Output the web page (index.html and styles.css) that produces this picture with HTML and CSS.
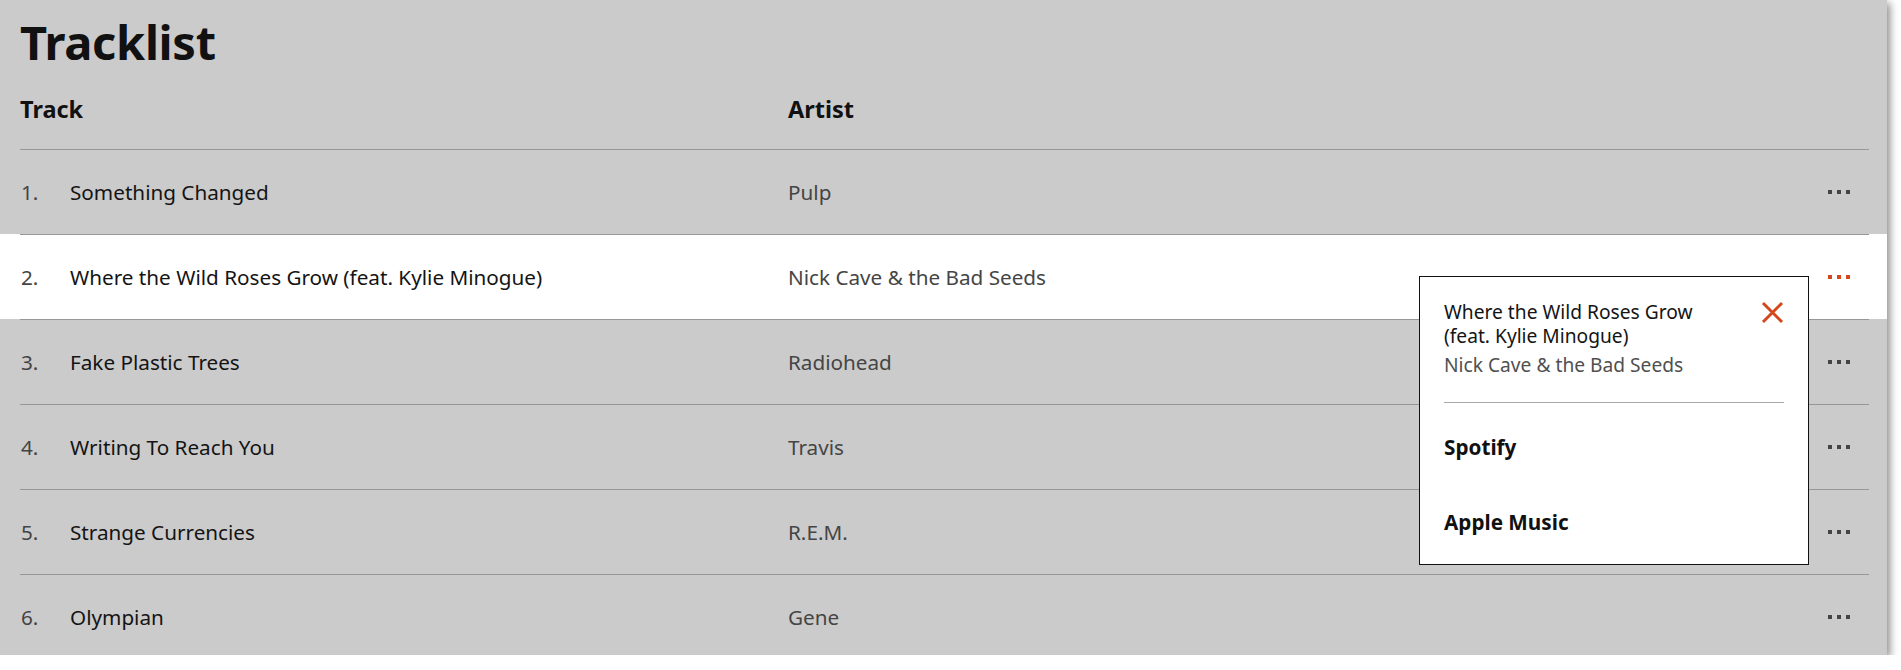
FILE: index.html
```html
<!DOCTYPE html>
<html lang="en">
<head>
<meta charset="utf-8">
<title>Tracklist</title>
<link rel="stylesheet" href="styles.css">
</head>
<body>
<section class="panel">
  <h1 class="title">Tracklist</h1>
  <div class="head">
    <div class="col-track">Track</div>
    <div class="col-artist">Artist</div>
  </div>
  <div class="rows">
    <div class="row">
      <div class="row-inner">
        <span class="num">1.</span>
        <span class="name">Something Changed</span>
        <span class="artist">Pulp</span>
        <span class="more"><i></i><i></i><i></i></span>
      </div>
    </div>
    <div class="row active">
      <div class="row-inner">
        <span class="num">2.</span>
        <span class="name">Where the Wild Roses Grow (feat. Kylie Minogue)</span>
        <span class="artist">Nick Cave &amp; the Bad Seeds</span>
        <span class="more"><i></i><i></i><i></i></span>
      </div>
    </div>
    <div class="row">
      <div class="row-inner">
        <span class="num">3.</span>
        <span class="name">Fake Plastic Trees</span>
        <span class="artist">Radiohead</span>
        <span class="more"><i></i><i></i><i></i></span>
      </div>
    </div>
    <div class="row">
      <div class="row-inner">
        <span class="num">4.</span>
        <span class="name">Writing To Reach You</span>
        <span class="artist">Travis</span>
        <span class="more"><i></i><i></i><i></i></span>
      </div>
    </div>
    <div class="row">
      <div class="row-inner">
        <span class="num">5.</span>
        <span class="name">Strange Currencies</span>
        <span class="artist">R.E.M.</span>
        <span class="more"><i></i><i></i><i></i></span>
      </div>
    </div>
    <div class="row">
      <div class="row-inner">
        <span class="num">6.</span>
        <span class="name">Olympian</span>
        <span class="artist">Gene</span>
        <span class="more"><i></i><i></i><i></i></span>
      </div>
    </div>

    <div class="popup">
      <div class="popup-head">
        <div class="popup-title">Where the Wild Roses Grow (feat. Kylie Minogue)</div>
        <svg class="close" width="23" height="23" viewBox="0 0 23 23" aria-hidden="true">
          <path d="M2 2 L21 21 M21 2 L2 21" stroke="#d4461b" stroke-width="3" fill="none"/>
        </svg>
      </div>
      <div class="popup-artist">Nick Cave &amp; the Bad Seeds</div>
      <ul class="popup-links">
        <li>Spotify</li>
        <li>Apple Music</li>
      </ul>
    </div>
  </div>
</section>
</body>
</html>
```
FILE: styles.css
```css
html, body {
  margin: 0;
  padding: 0;
  background: #ffffff;
}

body {
  font-family: "Noto Sans", "DejaVu Sans", sans-serif;
  color: #141414;
}

.panel {
  width: 1887px;
  height: 655px;
  background: #cbcbcb;
  box-shadow: 3px 3px 8px rgba(0, 0, 0, 0.45);
  overflow: hidden;
  box-sizing: border-box;
  padding-top: 12px;
}

.title {
  margin: 0 0 0 20px;
  font-size: 47px;
  line-height: 60px;
  font-weight: 700;
  color: #111;
  letter-spacing: -0.3px;
}

.head {
  display: flex;
  margin: 0 18px 0 20px;
  padding: 22px 0 25px;
  font-size: 23.5px;
  line-height: 30px;
  font-weight: 700;
  color: #111;
}

.col-track {
  width: 768px;
}

.rows {
  position: relative;
}

.row-inner {
  display: flex;
  align-items: center;
  height: 84px;
  margin: 0 18px 0 20px;
  border-top: 1px solid #979797;
  font-size: 20.7px;
}

.row.active {
  background: #ffffff;
}

.num {
  width: 50px;
  color: #444;
  padding-left: 1px;
  box-sizing: border-box;
}

.name {
  width: 718px;
  color: #141414;
}

.artist {
  flex: 1;
  color: #454545;
}

.more {
  display: flex;
  gap: 5px;
  margin-right: 19px;
}

.more i {
  display: block;
  width: 4px;
  height: 4px;
  background: #444;
}

.active .more i {
  background: #d4461b;
}

.popup {
  position: absolute;
  left: 1419px;
  top: 127px;
  width: 390px;
  box-sizing: border-box;
  background: #ffffff;
  border: 1px solid #111;
  padding: 23px 24px 5px 24px;
}

.popup-head {
  display: flex;
  justify-content: space-between;
  align-items: flex-start;
  gap: 20px;
}

.popup-title {
  font-size: 19.2px;
  line-height: 24px;
  color: #141414;
}

.close {
  flex: none;
  margin-top: 1px;
}

.popup-artist {
  margin-top: 5px;
  font-size: 19.2px;
  line-height: 24px;
  color: #505050;
  padding-bottom: 25px;
  border-bottom: 1px solid #a8a8a8;
}

.popup-links {
  list-style: none;
  margin: 0;
  padding: 6px 0 0;
}

.popup-links li {
  padding: 26px 0 25px;
  font-size: 20.7px;
  line-height: 24px;
  font-weight: 700;
  color: #111;
}
```
